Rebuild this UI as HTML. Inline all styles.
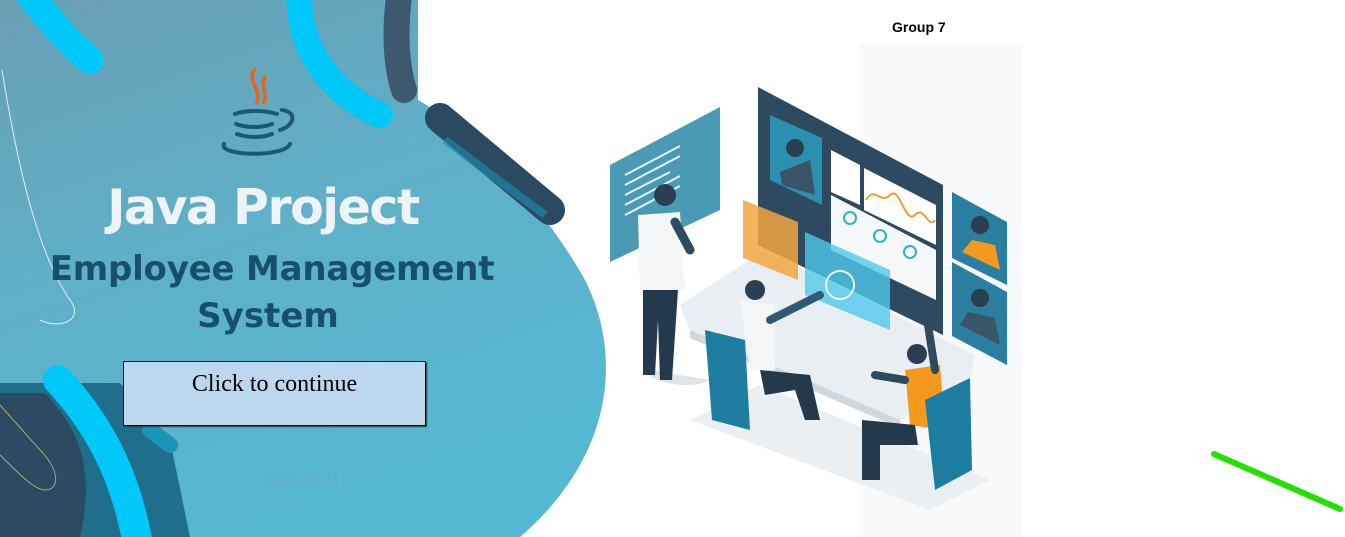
<!DOCTYPE html>
<html><head><meta charset="utf-8"><style>
html,body{margin:0;padding:0;width:1345px;height:537px;overflow:hidden;background:#fff;font-family:"Liberation Sans",sans-serif}
svg{position:absolute;left:0;top:0}
.btn{position:absolute;left:123px;top:361px;width:301px;height:63px;background:#bdd7ee;border:1px solid #111;box-shadow:1px 1px 1px #333;text-align:center;font-family:"Liberation Serif",serif;font-size:24px;line-height:44px;color:#000}
.grp{position:absolute;left:892px;top:19px;font-weight:bold;font-size:14px;color:#000}
</style></head><body>
<svg width="1345" height="537" viewBox="0 0 1345 537">
<defs>
<linearGradient id="bg" x1="0" y1="0" x2="0.4" y2="1"><stop offset="0" stop-color="#6a9fb4"/><stop offset="0.5" stop-color="#5fb0c8"/><stop offset="1" stop-color="#55b8d2"/></linearGradient>
</defs>
<rect x="860" y="45" width="162" height="492" fill="#f7f9fb"/>
<!-- blob -->
<path d="M0 0 L418 0 L418 100 C470 130 540 200 585 280 C625 360 610 460 520 537 L0 537 Z" fill="url(#bg)"/>
<path d="M2 70 C15 150 35 250 70 300 C85 320 60 330 40 320" fill="none" stroke="#dfeff4" stroke-width="1"/>
<path d="M30 -5 C50 20 70 45 90 60" stroke="#00c8f8" stroke-width="28" stroke-linecap="round" fill="none"/>
<path d="M300 -10 C295 40 325 90 380 115" stroke="#00c8f8" stroke-width="26" stroke-linecap="round" fill="none"/>
<path d="M400 -10 C394 30 396 65 404 90" stroke="#3e5870" stroke-width="26" stroke-linecap="round" fill="none"/>
<path d="M440 118 L550 210" stroke="#2a4a62" stroke-width="30" stroke-linecap="round" fill="none"/>
<path d="M445 140 L545 215" stroke="#1e8fb0" stroke-width="8" fill="none" opacity=".6"/>
<!-- bottom left -->
<path d="M0 383 L120 383 L170 440 L190 537 L0 537 Z" fill="#1f6e8c"/>
<path d="M0 393 L45 393 C80 430 95 470 80 537 L0 537 Z" fill="#2c4a62"/>
<path d="M0 405 L40 450 C60 470 60 490 45 490 C35 490 20 475 0 455" fill="none" stroke="#b8a070" stroke-width="1"/>
<path d="M58 380 C95 420 125 470 138 545" stroke="#00c8f8" stroke-width="30" stroke-linecap="round" fill="none"/>
<path d="M150 430 L170 445" stroke="#1a95b8" stroke-width="16" stroke-linecap="round"/>
<!-- java logo -->
<path d="M256 68 C244 80 264 90 256 104 M266 76 C258 84 270 94 263 104" stroke="#e8641c" stroke-width="3.5" fill="none"/>
<g fill="none" stroke="#1d5872" stroke-width="4" stroke-linecap="round">
<path d="M235 114 C245 110 265 110 277 114"/>
<path d="M236 124 C247 128 262 128 272 124"/>
<path d="M237 134 C248 138 262 138 272 134"/>
<path d="M224 144 C218 156 284 158 290 144"/>
<path d="M282 110 C298 112 294 126 280 130"/>
</g>
<text x="263" y="224" text-anchor="middle" font-family="DejaVu Sans" font-weight="bold" font-size="49" fill="#eef3f5" letter-spacing="-1.5">Java Project</text>
<text x="272" y="280" text-anchor="middle" font-family="DejaVu Sans" font-weight="bold" font-size="34" fill="#17506a" letter-spacing="-0.2">Employee Management</text>
<text x="268" y="327" text-anchor="middle" font-family="DejaVu Sans" font-weight="bold" font-size="34" fill="#17506a">System</text>
<text x="262" y="486" font-family="Liberation Sans" font-weight="bold" font-size="20" fill="#6aacc2" opacity=".7">Gurukul</text>
<!-- illustration -->
<path d="M650 370 C640 380 690 392 710 380 Z" fill="#e0e4e7"/>
<path d="M690 420 L760 385 L990 480 L930 510 Z" fill="#eceff1"/>
<polygon points="610,165 720,107 720,210 610,262" fill="#4a9ab5"/>
<g stroke="#e6f3f7" stroke-width="2"><line x1="625" y1="175" x2="680" y2="146"/><line x1="625" y1="185" x2="680" y2="156"/><line x1="625" y1="195" x2="670" y2="172"/><line x1="625" y1="205" x2="680" y2="176"/><line x1="625" y1="215" x2="680" y2="186"/></g>
<polygon points="758,87 943,185 943,335 758,245" fill="#2d4a60"/>
<polygon points="770,115 822,138 822,205 770,180" fill="#2b8fb0"/>
<circle cx="795" cy="148" r="9" fill="#2b3f52"/>
<path d="M780 172 L810 160 L815 195 L782 185 Z" fill="#3b5568"/>
<polygon points="831,150 860,165 860,205 831,192" fill="#fff"/>
<polygon points="864,168 936,205 936,245 864,210" fill="#fff"/>
<path d="M866 200 C875 185 880 205 890 195 C900 185 905 225 915 215 C925 205 928 230 935 220" stroke="#f0a030" stroke-width="2" fill="none"/>
<polygon points="831,195 936,250 936,300 831,250" fill="#f5f7f8"/>
<circle cx="850" cy="218" r="6" fill="none" stroke="#2db3c8" stroke-width="2"/>
<circle cx="880" cy="236" r="6" fill="none" stroke="#2db3c8" stroke-width="2"/>
<circle cx="910" cy="252" r="6" fill="none" stroke="#2db3c8" stroke-width="2"/>
<polygon points="952,192 1007,222 1007,285 952,258" fill="#2a7fa0"/>
<circle cx="980" cy="225" r="9" fill="#2b3f52"/><path d="M962 252 L972 240 L995 245 L1000 270 Z" fill="#f39a1e"/>
<polygon points="952,262 1007,292 1007,365 952,336" fill="#2a7fa0"/>
<circle cx="980" cy="298" r="9" fill="#2b3f52"/><path d="M960 325 L968 312 L995 318 L1000 345 Z" fill="#3b5568"/>
<path d="M680 305 L765 250 L975 355 L970 380 L900 420 L690 330 Z" fill="#e9eef2"/>
<path d="M690 330 L900 420 L900 428 L690 338 Z" fill="#cfd8de"/>
<polygon points="743,200 798,222 798,280 743,258" fill="#f2a640" opacity=".85"/>
<polygon points="805,232 890,270 890,330 805,295" fill="#4fc8ea" opacity=".8"/>
<circle cx="840" cy="285" r="14" fill="none" stroke="#e8f8fc" stroke-width="2"/>
<circle cx="665" cy="195" r="11" fill="#2b3f52"/>
<path d="M638 215 L680 212 L685 290 L640 290 Z" fill="#f3f5f6"/>
<path d="M675 222 L690 250" stroke="#2e4a5e" stroke-width="9" stroke-linecap="round"/>
<path d="M643 290 L678 290 L672 380 L660 380 L658 320 L655 375 L643 375 Z" fill="#24394b"/>
<path d="M705 330 L745 340 L750 430 L712 420 Z" fill="#1e7ea1"/>
<circle cx="755" cy="290" r="10" fill="#2b3f52"/>
<path d="M740 300 L775 305 L775 370 L750 370 Z" fill="#f3f5f6"/>
<path d="M770 320 L820 295" stroke="#2e5a72" stroke-width="8" stroke-linecap="round"/>
<path d="M760 370 L810 375 L820 420 L805 420 L795 390 L765 395 Z" fill="#24394b"/>
<circle cx="917" cy="354" r="10" fill="#2b3f52"/>
<path d="M905 370 L940 365 L945 430 L910 425 Z" fill="#f39a1e"/>
<path d="M905 380 L875 375 M935 370 L928 325" stroke="#2e4a5e" stroke-width="8" stroke-linecap="round"/>
<path d="M862 420 L915 425 L918 445 L880 445 L880 480 L862 480 Z" fill="#24394b"/>
<path d="M925 400 L970 378 L972 470 L935 490 Z" fill="#1e7ea1"/>
<line x1="1214" y1="454" x2="1340" y2="509" stroke="#22e000" stroke-width="6" stroke-linecap="round"/>
</svg>
<div class="btn">Click to continue</div>
<div class="grp">Group 7</div>
</body></html>
